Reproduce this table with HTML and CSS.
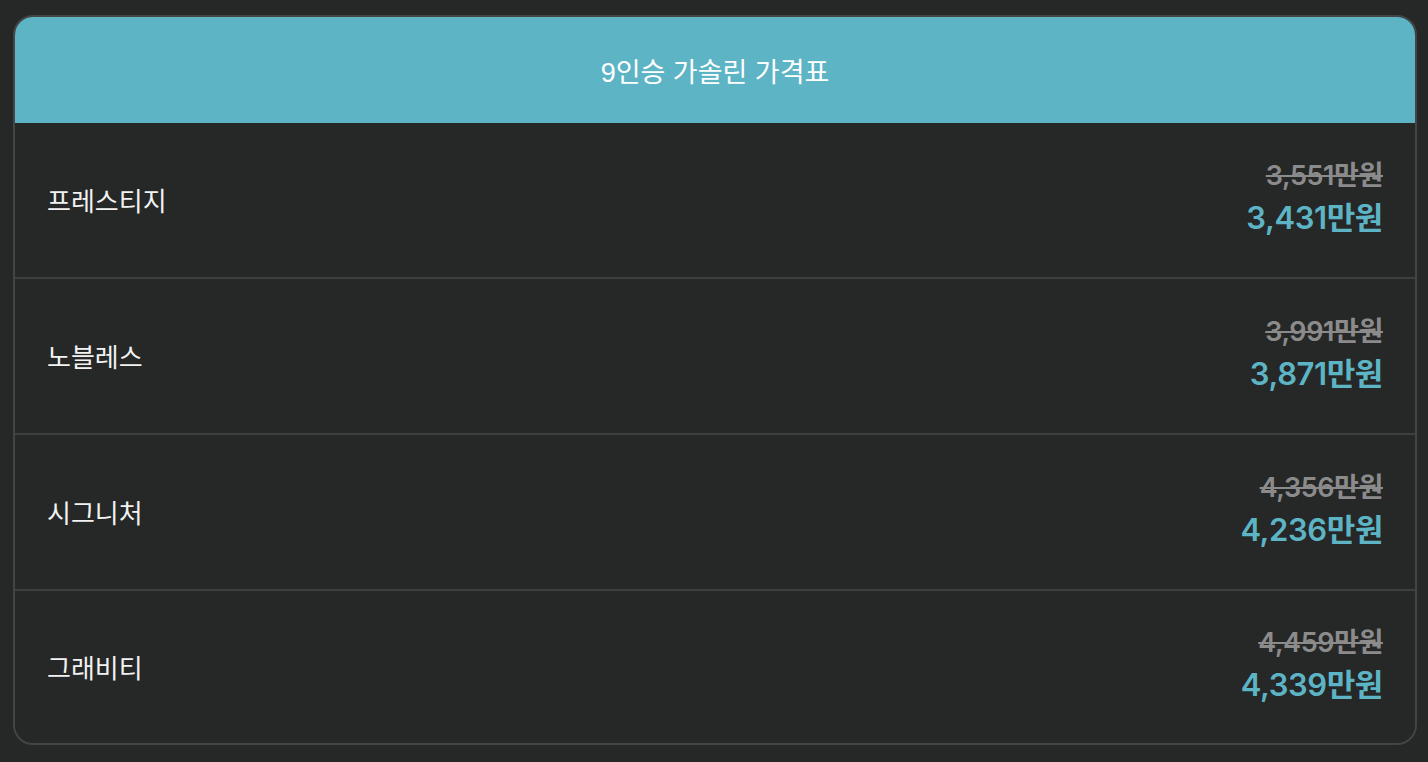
FILE: index.html
```html
<!DOCTYPE html>
<html lang="ko">
<head>
<meta charset="utf-8">
<title>9인승 가솔린 가격표</title>
<link rel="stylesheet" href="styles.css">
</head>
<body>
<div class="card">
  <div class="card-header">9인승 가솔린 가격표</div>
  <div class="row">
    <div class="trim">프레스티지</div>
    <div class="prices">
      <div class="old">3,551만원</div>
      <div class="new">3,431만원</div>
    </div>
  </div>
  <div class="row">
    <div class="trim">노블레스</div>
    <div class="prices">
      <div class="old">3,991만원</div>
      <div class="new">3,871만원</div>
    </div>
  </div>
  <div class="row">
    <div class="trim">시그니처</div>
    <div class="prices">
      <div class="old">4,356만원</div>
      <div class="new">4,236만원</div>
    </div>
  </div>
  <div class="row">
    <div class="trim">그래비티</div>
    <div class="prices">
      <div class="old">4,459만원</div>
      <div class="new">4,339만원</div>
    </div>
  </div>
</div>
</body>
</html>
```

FILE: styles.css
```css
html, body {
  margin: 0;
  padding: 0;
  background: #262727;
}
body {
  padding: 15px 11px 0 13px;
  font-family: "Liberation Sans", "Noto Sans CJK KR", sans-serif;
}
.card {
  border: 2px solid #434444;
  border-radius: 20px;
  overflow: hidden;
  background: #262727;
}
.card-header {
  height: 106px;
  background: #5db4c5;
  color: #ffffff;
  font-size: 27px;
  display: flex;
  align-items: center;
  justify-content: center;
}
.row {
  height: 154px;
  display: flex;
  align-items: center;
  justify-content: space-between;
  padding: 0 32px 0 32px;
  border-bottom: 2px solid #3d3e3e;
}
.row:last-child {
  border-bottom: none;
  height: 152px;
}
.trim {
  color: #f2f2f2;
  font-size: 26px;
  font-family: "Noto Sans CJK KR", sans-serif;
  padding-bottom: 2px;
}
.prices {
  display: flex;
  flex-direction: column;
  align-items: flex-end;
  gap: 8px;
  padding-bottom: 2px;
  font-family: "Inter", "Noto Sans CJK KR", sans-serif;
  font-weight: 600;
  letter-spacing: -0.4px;
}
.old {
  color: #8b8b8b;
  font-size: 27px;
  line-height: 30px;
  text-decoration: line-through;
  text-decoration-thickness: 2px;
}
.new {
  color: #5db4c5;
  font-size: 31px;
  line-height: 38px;
}
```
